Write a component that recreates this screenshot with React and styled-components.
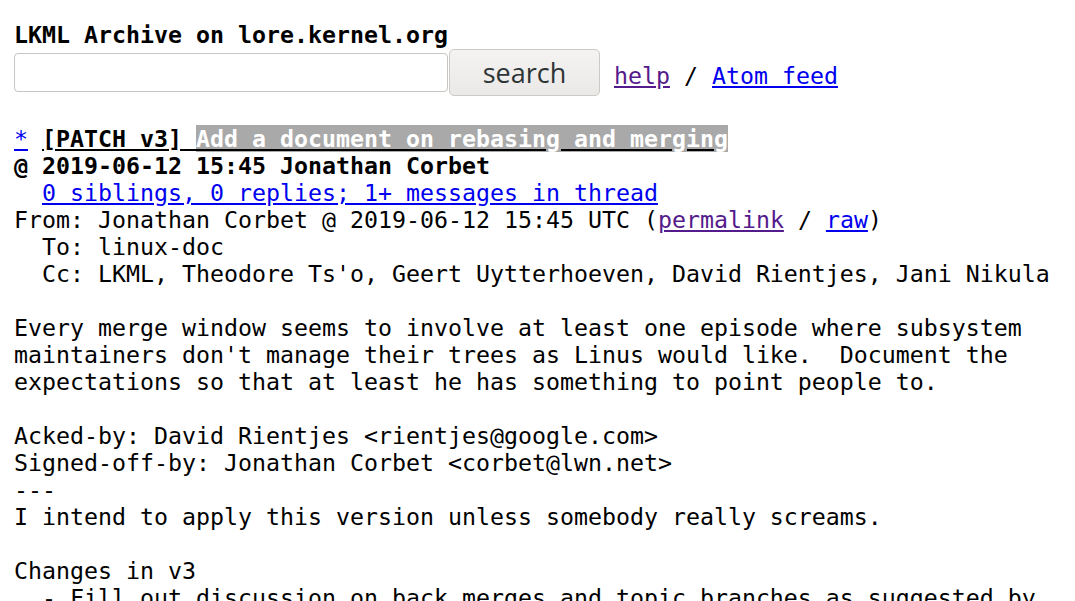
import React from "react";
import styled, { createGlobalStyle } from "styled-components";

const GlobalStyle = createGlobalStyle`
  html, body {
    margin: 0;
    padding: 0;
    background: #ffffff;
  }
  body {
    font-family: "DejaVu Sans Mono", "Liberation Mono", monospace;
    font-size: 23.25px;
    line-height: 27px;
    color: #000000;
  }
`;

const Page = styled.div`
  padding: 21px 14px 0 14px;
`;

const Header = styled.form`
  margin: 0;
  display: flex;
  flex-direction: column;
`;

const Title = styled.div`
  font-weight: bold;
  white-space: pre;
  height: 27px;
`;

const SearchRow = styled.div`
  display: flex;
  align-items: center;
  margin-top: 1px;
`;

const SearchInput = styled.input`
  box-sizing: border-box;
  width: 434px;
  height: 39px;
  margin: 0;
  padding: 0 8px;
  border: 1px solid #c9c4bf;
  border-radius: 4px;
  background: #ffffff;
  font: inherit;
  outline: none;
`;

const SearchButton = styled.button`
  box-sizing: border-box;
  width: 151px;
  height: 47px;
  margin: 0 0 0 1px;
  padding: 0;
  border: 1px solid #cdc9c5;
  border-radius: 5px;
  background: linear-gradient(#f4f3f2, #ebe9e7);
  color: #2e3436;
  font-family: "Open Sans", "Noto Sans", sans-serif;
  font-size: 27px;
  line-height: 1;
`;

const HeaderLinks = styled.span`
  margin-left: 14px;
  padding-top: 6px;
  white-space: pre;
`;

const Link = styled.a`
  color: ${(p) => (p.$visited ? "#551a8b" : "#0000ee")};
  text-decoration: underline;
`;

const Message = styled.pre`
  margin: 28.5px 0 0 0;
  font-family: inherit;
  font-size: inherit;
  line-height: inherit;
  white-space: pre;
`;

const Bold = styled.b`
  font-weight: bold;
`;

const Subject = styled.u`
  font-weight: bold;
  text-decoration: underline;
  text-decoration-color: #000000;
`;

const Selected = styled.span`
  background: #a9a9a9;
  color: #ffffff;
  text-decoration: underline;
  text-decoration-color: #000000;
`;

export default function App() {
  return (
    <>
      <GlobalStyle />
      <Page>
        <Header onSubmit={(e) => e.preventDefault()}>
          <Title>LKML Archive on lore.kernel.org</Title>
          <SearchRow>
            <SearchInput type="text" name="q" />
            <SearchButton type="submit">search</SearchButton>
            <HeaderLinks>
              <Link href="#help" $visited>
                help
              </Link>
              {" / "}
              <Link href="#atom">Atom feed</Link>
            </HeaderLinks>
          </SearchRow>
        </Header>
        <Message>
          <Link href="#top">*</Link>{" "}
          <Subject>
            [PATCH v3] <Selected>Add a document on rebasing and merging</Selected>
          </Subject>
          {"\n"}
          <Bold>@ 2019-06-12 15:45 Jonathan Corbet</Bold>
          {"\n  "}
          <Link href="#related">0 siblings, 0 replies; 1+ messages in thread</Link>
          {"\nFrom: Jonathan Corbet @ 2019-06-12 15:45 UTC ("}
          <Link href="#permalink" $visited>
            permalink
          </Link>
          {" / "}
          <Link href="#raw">raw</Link>
          {")\n"}
          {"  To: linux-doc\n"}
          {"  Cc: LKML, Theodore Ts'o, Geert Uytterhoeven, David Rientjes, Jani Nikula\n"}
          {"\n"}
          {"Every merge window seems to involve at least one episode where subsystem\n"}
          {"maintainers don't manage their trees as Linus would like.  Document the\n"}
          {"expectations so that at least he has something to point people to.\n"}
          {"\n"}
          {"Acked-by: David Rientjes <rientjes@google.com>\n"}
          {"Signed-off-by: Jonathan Corbet <corbet@lwn.net>\n"}
          {"---\n"}
          {"I intend to apply this version unless somebody really screams.\n"}
          {"\n"}
          {"Changes in v3\n"}
          {"  - Fill out discussion on back merges and topic branches as suggested by\n"}
        </Message>
      </Page>
    </>
  );
}
